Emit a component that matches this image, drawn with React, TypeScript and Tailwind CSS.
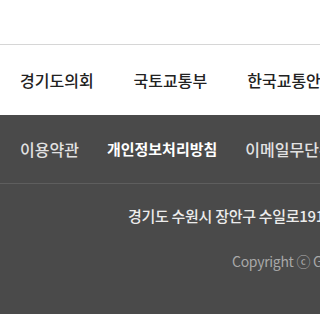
const familyLinks = ['경기도의회', '국토교통부', '한국교통안전공단', '한국도로공사'];
const policyLinks = [
  { label: '이용약관', strong: false },
  { label: '개인정보처리방침', strong: true },
  { label: '이메일무단수집거부', strong: false },
  { label: '저작권정책', strong: false },
];

export default function App() {
  return (
    <div className="w-[320px] h-[314px] overflow-hidden bg-white font-['Noto_Sans_CJK_KR',sans-serif]">
      {/* Top spacer */}
      <div className="h-[45px] border-b border-[#d6d6d6]" />

      {/* Related sites */}
      <ul className="flex h-[70px] items-center gap-10 whitespace-nowrap px-5">
        {familyLinks.map((name) => (
          <li key={name} className="text-[16px] leading-6 font-medium text-[#222]">
            {name}
          </li>
        ))}
      </ul>

      {/* Footer */}
      <footer className="h-[199px] bg-[#4a4a4a]">
        <ul className="flex h-[69px] items-center gap-[28px] whitespace-nowrap border-b border-[#5e5e5e] px-5">
          {policyLinks.map((item) => (
            <li
              key={item.label}
              className={
                item.strong
                  ? 'text-[15px] leading-6 font-bold text-white'
                  : 'text-[16px] leading-6 font-medium text-[#e2e2e2]'
              }
            >
              {item.label}
            </li>
          ))}
        </ul>

        <div className="whitespace-nowrap pl-[128px] pt-5">
          <p className="text-[15px] leading-6 font-medium tracking-[-0.3px] text-[#ececec]">
            경기도 수원시 장안구 수일로191번길 15
          </p>
          <p className="mt-[21px] pl-[104px] text-[14px] leading-6 tracking-[-0.3px] text-[#a8a8a8]">
            Copyright ⓒ Gyeonggi-do. All rights reserved.
          </p>
        </div>
      </footer>
    </div>
  );
}
